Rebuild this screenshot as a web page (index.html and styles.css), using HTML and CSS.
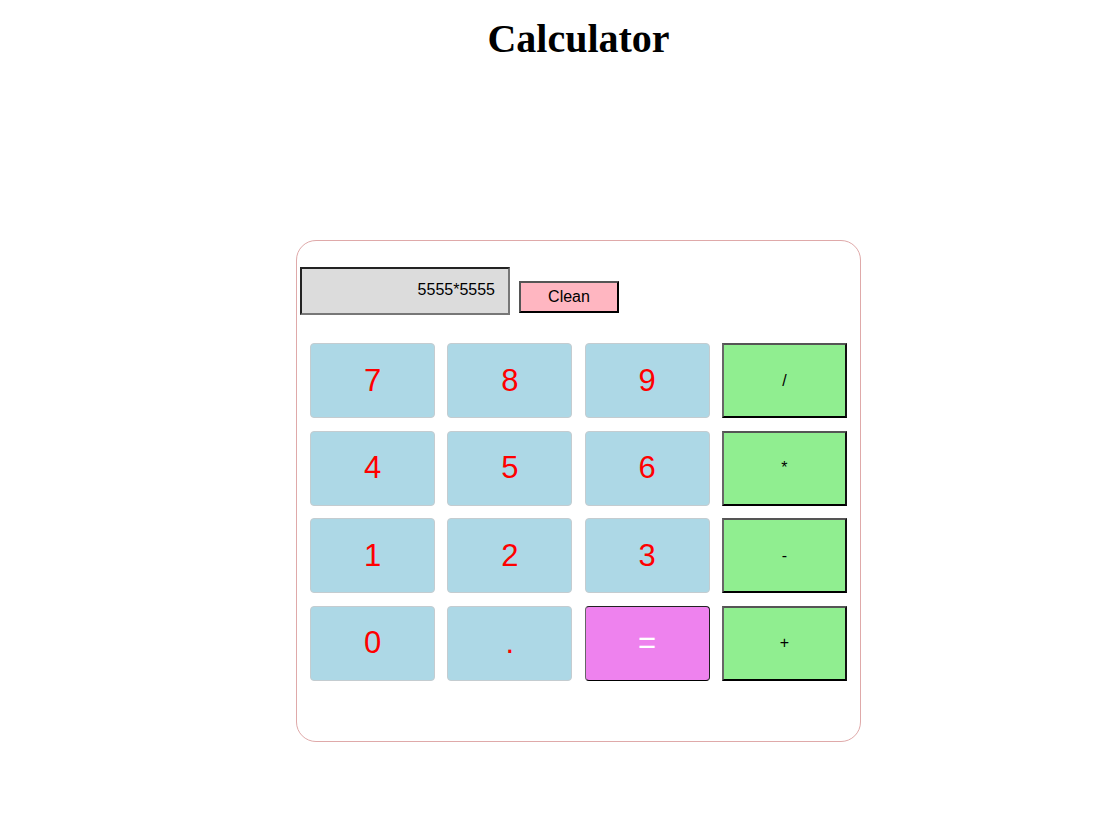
FILE: index.html
```html
<!DOCTYPE html>
<html>
<head>
<meta charset="utf-8">
<link rel="stylesheet" href="styles.css">
</head>
<body>
<div class="wrap">
  <h1 class="title">Calculator</h1>
  <div class="calc">
    <div class="top">
      <div class="display">5555*5555</div>
      <button class="clean">Clean</button>
    </div>
    <div class="keys">
      <button class="key num">7</button>
      <button class="key num">8</button>
      <button class="key num">9</button>
      <button class="key op">/</button>
      <button class="key num">4</button>
      <button class="key num">5</button>
      <button class="key num">6</button>
      <button class="key op">*</button>
      <button class="key num">1</button>
      <button class="key num">2</button>
      <button class="key num">3</button>
      <button class="key op">-</button>
      <button class="key num">0</button>
      <button class="key num">.</button>
      <button class="key eq">=</button>
      <button class="key op">+</button>
    </div>
  </div>
</div>
</body>
</html>
```
FILE: styles.css
```css
body {
  margin: 0;
  background: #fff;
  font-family: "Liberation Serif", serif;
}
.wrap {
  width: 565px;
  margin-left: 296px;
  padding-top: 16px;
}
.title {
  text-align: center;
  font-size: 40px;
  margin: 0;
  line-height: 46px;
}
.calc {
  margin-top: 178px;
  border: 1px solid #dfa9a9;
  border-radius: 20px;
  padding: 26px 3px 0;
  box-sizing: border-box;
  height: 502px;
}
.top {
  display: flex;
  align-items: flex-end;
  gap: 9px;
}
.display {
  width: 210px;
  height: 48px;
  box-sizing: border-box;
  background: #dcdcdc;
  border: 2px solid;
  border-color: #222 #777 #777 #222;
  font-family: "Liberation Sans", Arial, sans-serif;
  font-size: 16px;
  text-align: right;
  padding: 12px 13px 0 0;
  color: #000;
}
.clean {
  width: 100px;
  height: 32px;
  margin-bottom: 2px;
  background: #ffb6c1;
  border: 2px solid;
  border-color: #555 #000 #000 #555;
  font-family: "Liberation Sans", Arial, sans-serif;
  font-size: 16px;
  color: #000;
  padding: 0;
}
.keys {
  margin: 28px 10px 0;
  display: grid;
  grid-template-columns: repeat(4, 125px);
  grid-auto-rows: 75px;
  column-gap: 12.33px;
  row-gap: 12.67px;
}
.key {
  box-sizing: border-box;
  font-family: "Liberation Sans", Arial, sans-serif;
  padding: 0;
  margin: 0;
}
.num {
  background: #add8e6;
  border: 1px solid #c4ccd0;
  border-radius: 4px;
  color: #ff0000;
  font-size: 31px;
}
.op {
  background: #90ee90;
  border: 2px solid;
  border-color: #555 #111 #000 #666;
  color: #000;
  font-size: 16px;
}
.eq {
  background: #ee82ee;
  border: 1px solid #000;
  border-color: #222 #222 #000 #666;
  border-radius: 4px;
  color: #fff;
  font-size: 31px;
}
```
